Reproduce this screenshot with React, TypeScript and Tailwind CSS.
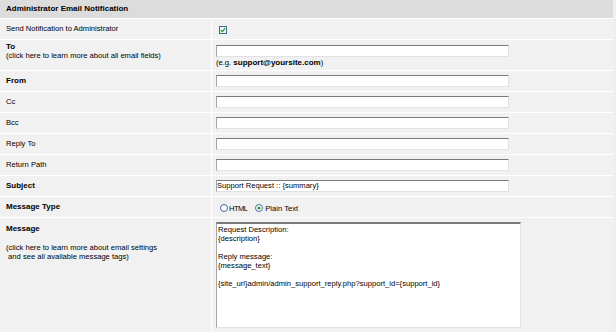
import React from "react";

const F = "font-['Liberation_Sans',Arial,sans-serif]";

function Field({ value = "" }: { value?: string }) {
  return (
    <div className="h-[12px] w-[293px] bg-white border border-[#e2e2e2] border-t-[#7a7a7a] border-l-[#a5a5a5] text-[7.6px] leading-[10px] whitespace-nowrap overflow-hidden text-black">
      {value}
    </div>
  );
}

function Radio({ checked }: { checked?: boolean }) {
  return (
    <svg width="8" height="8" viewBox="0 0 8 8" className="shrink-0">
      <circle cx="4" cy="4" r="3.5" fill="#ffffff" stroke="#2f5f92" strokeWidth="0.9" />
      {checked && <circle cx="4" cy="4" r="1.6" fill="#2aa12a" />}
    </svg>
  );
}

function Row({
  h,
  label,
  children,
  bold,
}: {
  h: string;
  label: React.ReactNode;
  children?: React.ReactNode;
  bold?: boolean;
}) {
  return (
    <>
      <div className={`${h} bg-[#f1f1f1] flex items-center pl-[6px] ${bold ? "font-bold text-[8px]" : "text-[7.6px]"}`}>
        {label}
      </div>
      <div className={`${h} bg-[#f1f1f1] flex items-center pl-[4px]`}>{children}</div>
    </>
  );
}

export default function App() {
  return (
    <div className={`w-[616px] h-[332px] overflow-hidden bg-[#efefef] ${F} text-black`}>
      <div className="w-[613px] bg-white grid grid-cols-[211px_401px] gap-px">
        <div className="col-span-2 h-[18px] bg-[#dcdcdc] flex items-center pl-[6px] text-[8px] font-bold">
          Administrator Email Notification
        </div>

        <Row h="h-[20px]" label="Send Notification to Administrator">
          <div className="ml-[3px] mt-[1px] w-[8px] h-[8px] border border-[#3c6a96] bg-[#f4f4f4] flex items-center justify-center">
            <svg width="6" height="6" viewBox="0 0 6 6">
              <path d="M0.8 3.1 L2.3 4.6 L5.2 1.3" fill="none" stroke="#22a022" strokeWidth="1.3" />
            </svg>
          </div>
        </Row>

        <div className="h-[30px] bg-[#f1f1f1] pl-[6px] pt-[3px] leading-[8.5px]">
          <div className="font-bold text-[8px]">To</div>
          <div className="text-[7.6px]">(click here to learn more about all email fields)</div>
        </div>
        <div className="h-[30px] bg-[#f1f1f1] pl-[4px] pt-[5px]">
          <Field />
          <div className="text-[7.6px] leading-[10px] mt-px">
            (e.g. <span className="font-bold text-[8px]">support@yoursite.com</span>)
          </div>
        </div>

        <Row h="h-[20px]" label="From" bold>
          <Field />
        </Row>
        <Row h="h-[20px]" label="Cc">
          <Field />
        </Row>
        <Row h="h-[20px]" label="Bcc">
          <Field />
        </Row>
        <Row h="h-[20px]" label="Reply To">
          <Field />
        </Row>
        <Row h="h-[20px]" label="Return Path">
          <Field />
        </Row>
        <Row h="h-[20px]" label="Subject" bold>
          <Field value="Support Request :: {summary}" />
        </Row>
        <Row h="h-[20px]" label="Message Type" bold>
          <div className="flex items-center text-[7.6px] ml-[4px] mt-[3px]">
            <Radio />
            <span className="ml-[1px] tracking-[-0.6px]">HTML</span>
            <span className="ml-[8px]">
              <Radio checked />
            </span>
            <span className="ml-[2px]">Plain Text</span>
          </div>
        </Row>

        <div className="h-[120px] bg-[#f1f1f1] pl-[6px] pt-[6px]">
          <div className="font-bold text-[8px] leading-[9px]">Message</div>
          <div className="text-[7.6px] leading-[8.5px] mt-[11px] whitespace-pre">
            {"(click here to learn more about email settings\n and see all available message tags)"}
          </div>
        </div>
        <div className="h-[120px] bg-[#f1f1f1] pl-[4px] pt-[4px]">
          <div className="w-[305px] h-[106px] bg-white border border-[#e2e2e2] border-t-[#7a7a7a] border-l-[#a5a5a5] border-t-2 pt-[1px] pl-px text-[7.6px] leading-[9px] whitespace-pre overflow-hidden">
            {
              "Request Description:\n{description}\n\nReply message:\n{message_text}\n\n{site_url}admin/admin_support_reply.php?support_id={support_id}"
            }
          </div>
        </div>
      </div>
    </div>
  );
}
